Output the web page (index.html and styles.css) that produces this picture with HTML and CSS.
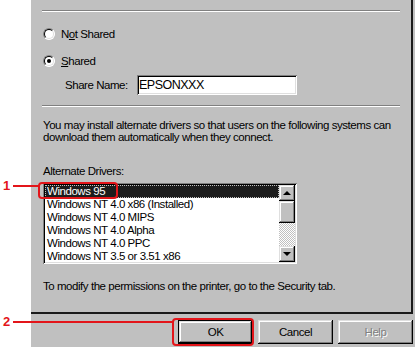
FILE: index.html
```html
<!DOCTYPE html>
<html lang="en">
<head>
    <meta charset="UTF-8">
    <title>Sharing</title>
    <link rel="stylesheet" href="styles.css">
</head>
<body>
    <div class="dialog">
        <div class="page">
            <div class="sep"></div>
            <div class="radio-row row-one"><span class="radio"></span><span>N<u>o</u>t Shared</span></div>
            <div class="radio-row row-two"><span class="radio checked"></span><span><u>S</u>hared</span></div>
            <div class="share-row">
                <span class="share-label">Share Name:</span>
                <span class="field">EPSONXXX</span>
            </div>
            <div class="sep sep-two"></div>
            <p class="info">You may install alternate drivers so that users on the following systems can<br>download them automatically when they connect.</p>
            <div class="list-label">Alternate Drivers:</div>
            <div class="listbox">
                <ul class="items">
                    <li class="selected">Windows 95</li>
                    <li>Windows NT 4.0 x86 (Installed)</li>
                    <li>Windows NT 4.0 MIPS</li>
                    <li>Windows NT 4.0 Alpha</li>
                    <li>Windows NT 4.0 PPC</li>
                    <li>Windows NT 3.5 or 3.51 x86</li>
                </ul>
                <div class="scrollbar">
                    <div class="sb-btn"><span class="arrow-up"></span></div>
                    <div class="sb-thumb"></div>
                    <div class="sb-track"></div>
                    <div class="sb-btn"><span class="arrow-down"></span></div>
                </div>
            </div>
            <p class="note">To modify the permissions on the printer, go to the Security tab.</p>
        </div>
        <div class="buttons">
            <div class="btn default">OK</div>
            <div class="btn">Cancel</div>
            <div class="btn disabled">Help</div>
        </div>
    </div>

    <!-- callouts -->
    <div class="callout c-one">
        <span class="num">1</span><span class="line"></span>
    </div>
    <div class="frame f-one"></div>
    <div class="callout c-two">
        <span class="num">2</span><span class="line"></span>
    </div>
    <div class="frame f-two"></div>
</body>
</html>
```

FILE: styles.css
```css
body{
    margin: 0;
    width: 415px;
    height: 347px;
    background: #fff;
    position: relative;
    overflow: hidden;
    font-family: "Liberation Sans", Arial, sans-serif;
    font-size: 11.5px;
    letter-spacing: -0.45px;
    color: #000;
}
.dialog{
    margin-left: 31px;
    height: 347px;
    background: #c0c0c0;
}
.page{
    box-sizing: border-box;
    width: 382px;
    height: 314px;
    padding: 10px 11px 0 12px;
    border-right: 2px solid #1a1a1a;
    border-bottom: 2px solid #1a1a1a;
}
.sep{
    height: 0;
    margin-left: -1px;
    border-top: 1px solid #808080;
    border-bottom: 1px solid #fff;
}
.sep-two{
    margin-top: 10px;
}
.radio-row{
    display: flex;
    align-items: center;
    gap: 6px;
    height: 16px;
}
.row-one{
    margin-top: 14px;
}
.row-two{
    margin-top: 11px;
}
.radio{
    box-sizing: border-box;
    width: 12px;
    height: 12px;
    border-radius: 50%;
    border: 1px solid;
    border-color: #808080 #fff #fff #808080;
    background: #fff;
    position: relative;
}
.radio::before{
    content: "";
    position: absolute;
    inset: 0;
    border-radius: 50%;
    border: 1px solid;
    border-color: #000 #dfdfdf #dfdfdf #000;
}
.radio.checked::after{
    content: "";
    position: absolute;
    left: 3px;
    top: 3px;
    width: 4px;
    height: 4px;
    border-radius: 50%;
    background: #000;
}
.share-row{
    display: flex;
    align-items: center;
    margin-top: 6px;
    padding-left: 22px;
}
.share-label{
    width: 72px;
    white-space: nowrap;
}
.field{
    box-sizing: border-box;
    width: 160px;
    height: 20px;
    padding: 1px 2px 0;
    background: #fff;
    font-size: 12.5px;
    letter-spacing: -0.5px;
    line-height: 18px;
    box-shadow: inset 1px 1px #808080, inset -1px -1px #fff, inset 2px 2px #000, inset -2px -2px #dfdfdf;
}
.info{
    margin: 12px 0 0;
    line-height: 12px;
    white-space: nowrap;
}
.list-label{
    margin-top: 22px;
    line-height: 13px;
}
.listbox{
    box-sizing: border-box;
    display: flex;
    width: 254px;
    height: 81px;
    margin-top: 5px;
    padding: 2px;
    background: #fff;
    box-shadow: inset 1px 1px #808080, inset -1px -1px #fff, inset 2px 2px #000, inset -2px -2px #dfdfdf;
}
.items{
    flex: 1;
    margin: 0;
    padding: 0;
    list-style: none;
    overflow: hidden;
}
.items li{
    height: 13px;
    line-height: 13px;
    padding-left: 2px;
    white-space: nowrap;
}
.items li.selected{
    background: #1c1c1c;
    color: #fff;
    outline: 1px dotted #c0c0c0;
    outline-offset: -1px;
}
.scrollbar{
    width: 16px;
    display: flex;
    flex-direction: column;
}
.sb-btn, .sb-thumb, .btn{
    background: #c0c0c0;
    box-shadow: inset -1px -1px #000, inset 1px 1px #dfdfdf, inset -2px -2px #808080, inset 2px 2px #fff;
}
.sb-btn{
    height: 16px;
    display: flex;
    align-items: center;
    justify-content: center;
}
.sb-thumb{
    height: 22px;
}
.sb-track{
    flex: 1;
    background: repeating-conic-gradient(#fff 0 25%, #c0c0c0 0 50%) 0 0 / 2px 2px;
}
.arrow-up, .arrow-down{
    width: 0;
    height: 0;
    border-left: 4px solid transparent;
    border-right: 4px solid transparent;
}
.arrow-up{
    border-bottom: 4px solid #000;
}
.arrow-down{
    border-top: 4px solid #000;
}
.note{
    margin: 16px 0 0;
    line-height: 13px;
    white-space: nowrap;
}
.buttons{
    display: flex;
    justify-content: flex-end;
    gap: 5px;
    padding: 6px 2px 0 0;
}
.btn{
    box-sizing: border-box;
    width: 75px;
    height: 24px;
    line-height: 24px;
    text-align: center;
}
.btn.default{
    border: 1px solid #000;
    line-height: 22px;
}
.btn.disabled{
    color: #808080;
    text-shadow: 1px 1px #fff;
}
.callout{
    position: absolute;
    left: 3px;
    display: flex;
    align-items: center;
    color: #e3151a;
    font-weight: bold;
    font-size: 13px;
    letter-spacing: 0;
}
.callout .line{
    height: 2px;
    margin-left: 3px;
    background: #e3151a;
}
.c-one{
    top: 178px;
}
.c-one .line{
    width: 27px;
}
.c-two{
    top: 314px;
}
.c-two .line{
    width: 160px;
}
.frame{
    position: absolute;
    border: 2px solid #e3151a;
    border-radius: 4px;
}
.f-one{
    left: 38px;
    top: 182px;
    width: 76px;
    height: 13px;
}
.f-two{
    left: 172px;
    top: 318px;
    width: 78px;
    height: 24px;
}
```
